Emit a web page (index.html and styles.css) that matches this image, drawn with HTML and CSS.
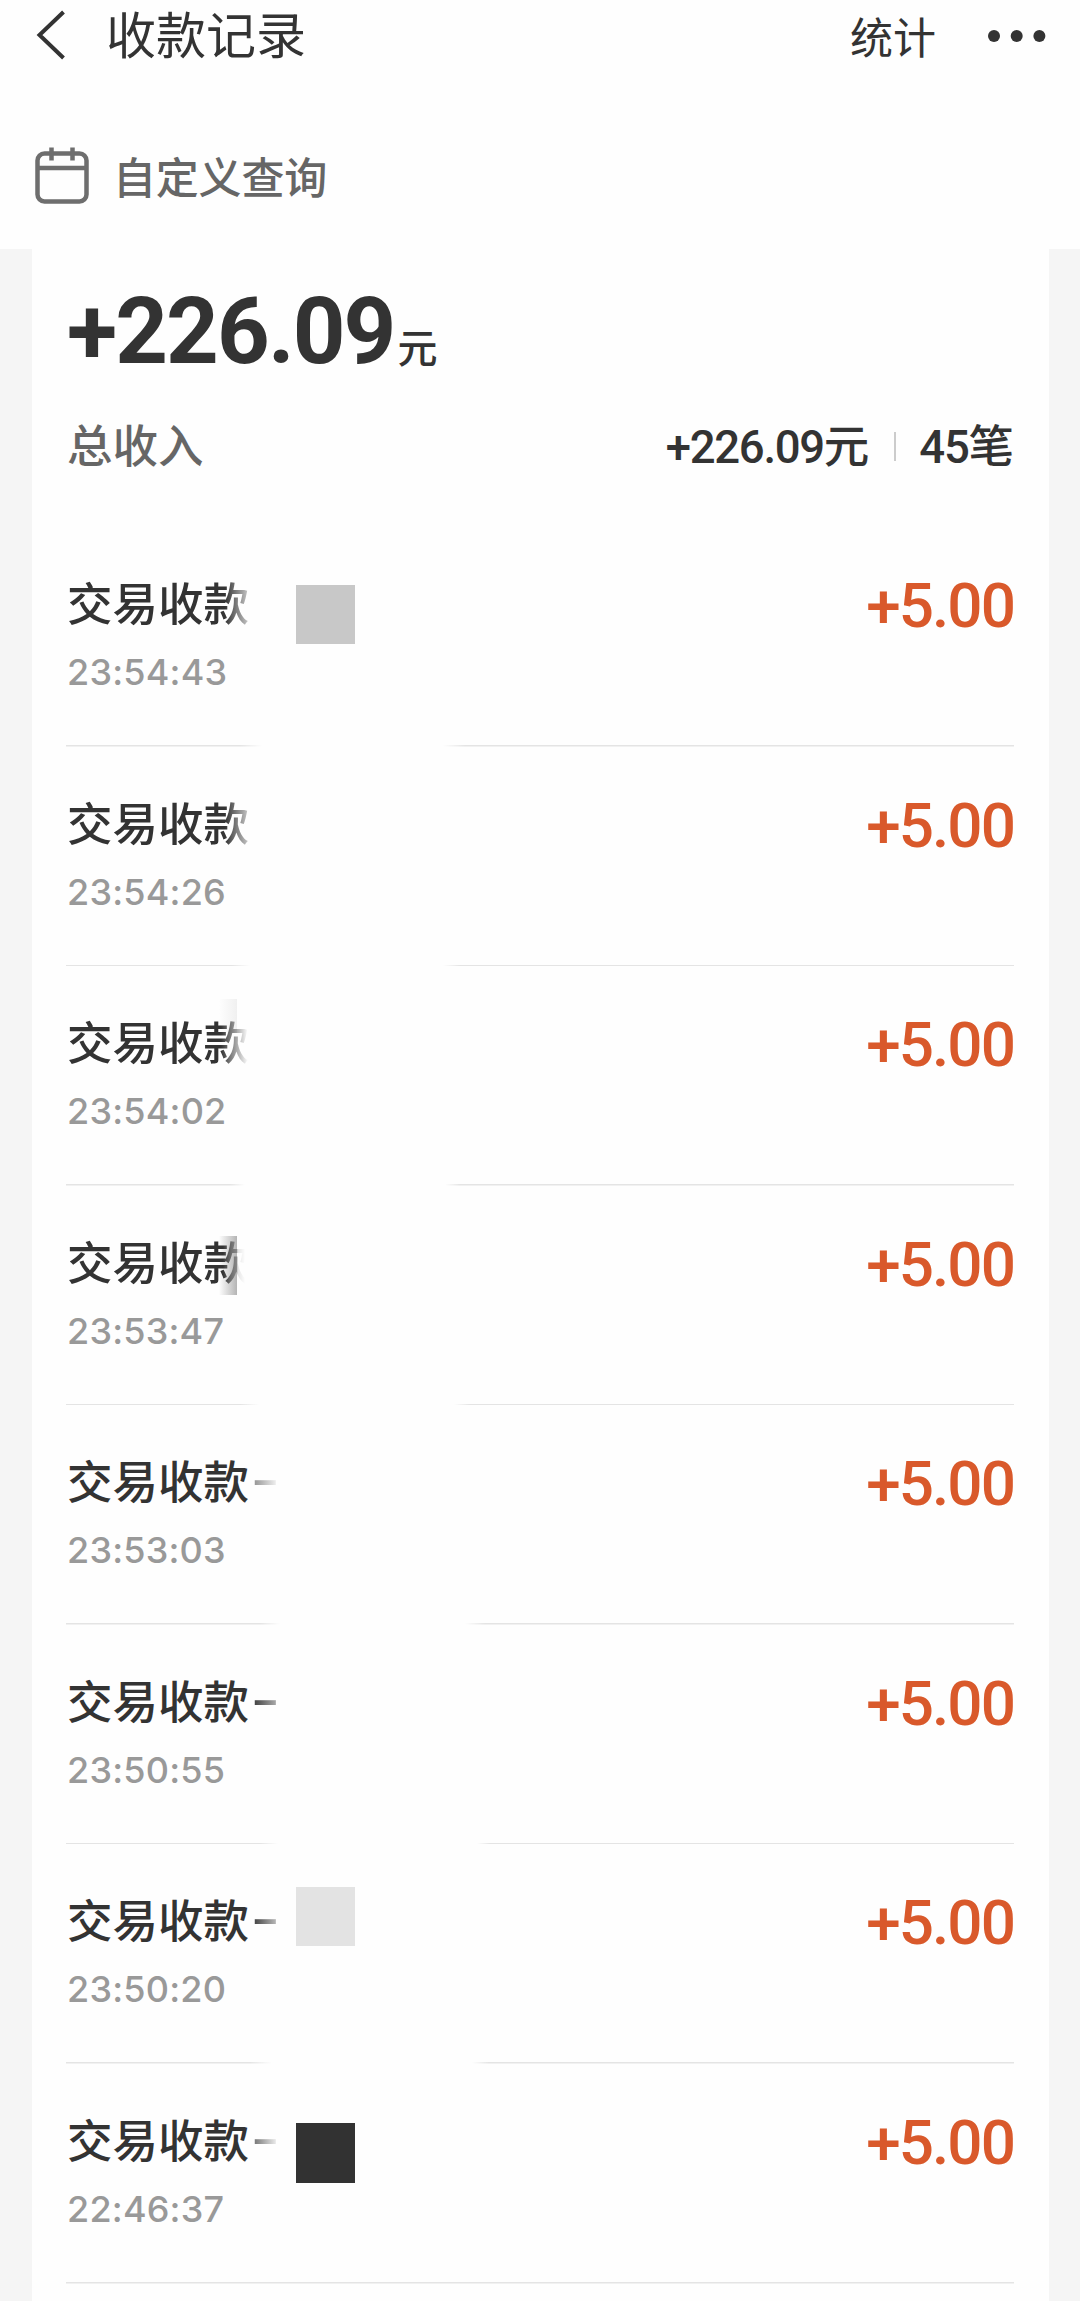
FILE: index.html
```html
<!DOCTYPE html>
<html lang="zh-CN">
<head>
<meta charset="utf-8">
<title>收款记录</title>
<link rel="stylesheet" href="styles.css">
</head>
<body>
<header class="navbar">
  <svg class="back" width="30" height="50" viewBox="0 0 30 50" fill="none" stroke="#333" stroke-width="4"><path d="M27.500 2 3.500 25l24 23"/></svg>
  <h1 class="title">收款记录</h1>
  <a class="stats">统计</a>
  <svg class="more" width="60" height="14" viewBox="0 0 60 14" fill="#333"><circle cx="7" cy="7" r="6"/><circle cx="29.7" cy="7" r="6"/><circle cx="52.4" cy="7" r="6"/></svg>
</header>
<div class="query">
  <svg class="calendar" width="54" height="58" viewBox="0 0 54 58" fill="none" stroke="#6e6e6e" stroke-width="4.500"><rect x="2.500" y="7.500" width="49" height="48" rx="7"/><path d="M3 22h48M16.500 1.500v13M37.500 1.500v13"/></svg>
  <span>自定义查询</span>
</div>
<div class="content">
<main class="card">
  <div class="total"><span class="total-num">+226.09</span><span class="total-unit">元</span></div>
  <div class="summary">
    <span class="summary-label">总收入</span>
    <span class="summary-sum"><span class="num">+226.09</span>元</span>
    <i class="sep"></i>
    <span class="summary-count"><span class="num">45</span>笔</span>
  </div>
  <ul class="list">
    <li class="row row-1"><div class="info"><div class="name">交易收款</div><div class="time">23:54:43</div></div><i class="mark mark-mid"></i><div class="amount">+5.00</div></li>
    <li class="row row-2"><div class="info"><div class="name">交易收款</div><div class="time">23:54:26</div></div><div class="amount">+5.00</div></li>
    <li class="row row-3"><div class="info"><div class="name">交易收款</div><div class="time">23:54:02</div></div><div class="amount">+5.00</div></li>
    <li class="row row-4"><div class="info"><div class="name">交易收款</div><div class="time">23:53:47</div></div><div class="amount">+5.00</div></li>
    <li class="row row-5"><div class="info"><div class="name">交易收款<span class="dash">-</span></div><div class="time">23:53:03</div></div><div class="amount">+5.00</div></li>
    <li class="row row-6"><div class="info"><div class="name">交易收款<span class="dash">-</span></div><div class="time">23:50:55</div></div><div class="amount">+5.00</div></li>
    <li class="row row-7"><div class="info"><div class="name">交易收款<span class="dash">-</span></div><div class="time">23:50:20</div></div><i class="mark mark-light"></i><div class="amount">+5.00</div></li>
    <li class="row row-8"><div class="info"><div class="name">交易收款<span class="dash">-</span></div><div class="time">22:46:37</div></div><i class="mark mark-dark"></i><div class="amount">+5.00</div></li>
  </ul>
</main>
</div>
</body>
</html>
```
FILE: styles.css
```css
* { box-sizing: border-box; }
body {
  margin: 0;
  height: 2301px;
  overflow: hidden;
  display: flex;
  flex-direction: column;
  background: #fefefe;
  color: #333;
  font-family: "Noto Sans CJK SC", sans-serif;
}
svg { display: block; flex: none; }

.navbar {
  height: 70px;
  flex: none;
  display: flex;
  align-items: center;
  padding: 0 33px 0 36px;
}
.title {
  margin: 0 0 0 40px;
  padding-bottom: 5px;
  font-size: 50px;
  line-height: 65px;
  font-weight: 400;
}
.stats { margin-left: auto; font-size: 43px; line-height: 70px; }
.more { margin: 2px 0 0 51px; }

.query {
  height: 179px;
  flex: none;
  display: flex;
  align-items: flex-start;
  padding: 76px 0 0 35px;
  color: #666;
  font-size: 43px;
  line-height: 58px;
  font-weight: 500;
}
.query span { margin-left: 24px; letter-spacing: -0.200px; }

.content {
  flex: 1;
  min-height: 0;
  background: #f5f5f5;
  padding: 0 31px 0 32px;
}
.card { height: 100%; background: #fefefe; padding: 0 35px 0 34px; }

.total { height: 150px; padding: 36px 0 0 1px; line-height: 94px; white-space: nowrap; }
.total-num { font-family: Roboto, sans-serif; font-weight: 700; font-size: 92px; letter-spacing: -1.900px; }
.total-unit { font-size: 40px; font-weight: 500; margin-left: 3px; }

.summary {
  height: 128px;
  display: flex;
  align-items: flex-start;
  padding: 9px 0 0 1px;
  font-size: 45.500px;
  line-height: 70px;
  font-weight: 500;
  white-space: nowrap;
}
.summary-label { color: #666; margin-right: auto; }
.num { font-family: Roboto, sans-serif; font-size: 45.500px; letter-spacing: -1.300px; }
.sep { width: 2px; height: 29px; margin: 24px 23px 0 25px; background: #ccc; }

.list { margin: 0; padding: 0; list-style: none; }
.row {
  height: 219.57px;
  display: flex;
  align-items: flex-start;
  background: linear-gradient(90deg, #e4e4e4 var(--a), transparent var(--b), transparent var(--c), #e4e4e4 var(--d)) bottom / 100% 1.500px no-repeat;
}
.info { width: 230px; flex: none; padding: 40px 0 0 1px; }
.name { font-size: 45.500px; line-height: 68px; height: 68px; font-weight: 500; white-space: nowrap; }
.time {
  font-family: Inter, sans-serif;
  font-size: 36px;
  line-height: 44px;
  margin-top: 15px;
  font-weight: 500;
  letter-spacing: 0.200px;
  color: #999;
}
.amount {
  margin: 43px 0 0 auto;
  font-family: Roboto, sans-serif;
  font-size: 62px;
  line-height: 72px;
  font-weight: 500;
  letter-spacing: -1.900px;
  color: #d9592b;
}

.dash {
  display: inline-block;
  margin-left: 2px;
  font-weight: 700;
  transform: translateY(-3px) scaleX(1.700);
  transform-origin: left center;
  background: linear-gradient(90deg, var(--from), var(--to));
  -webkit-background-clip: text;
  background-clip: text;
  color: transparent;
}

.mark { width: 59px; height: 59px; flex: none; margin-top: 58px; }
.mark-mid { background: #c8c8c8; }
.mark-light { background: #e3e3e3; margin-top: 43px; }
.mark-dark { background: #323232; height: 60px; margin-top: 59px; }

/* Name fade-out and divider gap of each row */
.row-1 { --a: 174px; --b: 196px; --c: 377px; --d: 399px; }
.row-2 { --a: 166px; --b: 184px; --c: 377px; --d: 394px; }
.row-3 { --a: 164px; --b: 179px; --c: 379px; --d: 394px; }
.row-4 { --a: 174px; --b: 193px; --c: 388px; --d: 404px; }
.row-5 { --a: 194px; --b: 214px; --c: 399px; --d: 419px; --from: #888; --to: #fefefe; }
.row-6 { --a: 194px; --b: 212px; --c: 411px; --d: 424px; --from: #333; --to: #bbb; }
.row-7 { --a: 184px; --b: 206px; --c: 406px; --d: 423px; --from: #333; --to: #ccc; }
.row-8 { --from: #666; --to: #fefefe; background: linear-gradient(#e4e4e4, #e4e4e4) bottom / 100% 1.500px no-repeat; }
.row-1 .name, .row-2 .name { -webkit-mask-image: linear-gradient(90deg, #000 158px, transparent 190px); mask-image: linear-gradient(90deg, #000 158px, transparent 190px); }
.row-3 .name { -webkit-mask-image: linear-gradient(90deg, #000 154px, transparent 181px); mask-image: linear-gradient(90deg, #000 154px, transparent 181px); }
.row-4 .name { -webkit-mask-image: linear-gradient(90deg, #000 156px, rgba(0, 0, 0, .35) 170px, rgba(0, 0, 0, .12) 171px, transparent 178px); mask-image: linear-gradient(90deg, #000 156px, rgba(0, 0, 0, .35) 170px, rgba(0, 0, 0, .12) 171px, transparent 178px); }
.row-3 .info, .row-4 .info { background-repeat: no-repeat; }
.row-3 .info { background-image: linear-gradient(90deg, #fefefe, #f0f0f0); background-size: 18px 34px; background-position: 153px 33px; }
.row-4 .info { background-image: linear-gradient(90deg, #fefefe, #b4b4b4); background-size: 18px 59px; background-position: 153px 50px; }
```
